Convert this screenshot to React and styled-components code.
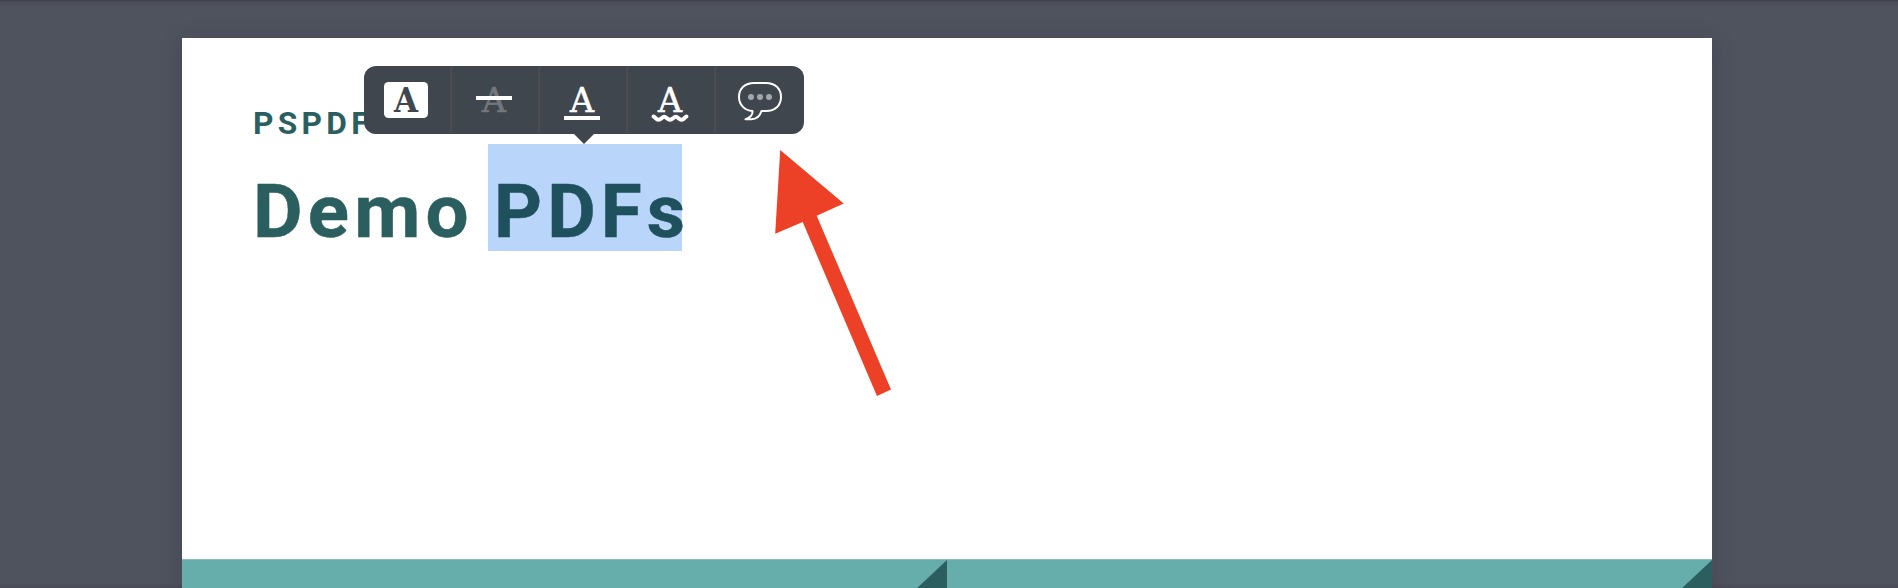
import React from "react";
import styled, { createGlobalStyle } from "styled-components";

const GlobalStyle = createGlobalStyle`
  * { box-sizing: border-box; }
  body { margin: 0; }
`;

const Viewport = styled.main`
  position: relative;
  height: 588px;
  overflow: hidden;
  padding: 38px 186px 0 182px;
  background: linear-gradient(#41444f 0, #41444f 1px, #4a4c58 2px, #4f535e 7px, #4f535e 583px, #494a56 588px);
  font-family: Roboto, "Liberation Sans", sans-serif;
`;

const Page = styled.article`
  display: flex;
  flex-direction: column;
  height: 570px;
  background: #fff;
  box-shadow: 0 4px 18px rgba(60, 52, 72, 0.4);
`;

const Heading = styled.header`
  flex: 0 0 521px;
  padding: 68px 0 0 71px;
  color: #2b5f5f;
`;

const Eyebrow = styled.p`
  margin: 0;
  font-size: 31.7px;
  line-height: 36px;
  font-weight: 700;
  letter-spacing: 4.3px;
  white-space: nowrap;
`;

const Title = styled.h1`
  display: flex;
  height: 107px;
  margin: 2px 0 0;
  font-size: 73.5px;
  line-height: 136px;
  font-weight: 700;
  letter-spacing: 5px;
  white-space: nowrap;
`;

const Word = styled.span`
  width: 235px;
`;

const Selected = styled.span`
  width: 194px;
  padding-left: 6px;
  background: #b9d5fa;
  color: #1f505d;
`;

const Wide = styled.span`
  display: inline-block;
  transform: scaleX(${(p) => p.$stretch});
  transform-origin: 0 50%;
  -webkit-text-stroke: 0.5px currentColor;
`;

const Band = styled.section`
  display: grid;
  grid-template-columns: 765px 765px;
  height: 49px;
`;

const Tile = styled.div`
  display: flex;
  justify-content: flex-end;
  background: #65aeab;
  border-top: 1px solid #8bbfbd;
`;

const Fold = styled.div`
  width: 32px;
  height: 30px;
  background: #2b5f5f;
  clip-path: polygon(100% 0, 100% 100%, 0 100%);
`;

const Toolbar = styled.nav`
  position: absolute;
  left: 364px;
  top: 66px;
  display: flex;
  width: 440px;
  height: 68px;
  border-radius: 12px;
  background: #40464e;

  &::after {
    content: "";
    position: absolute;
    left: 210px;
    top: 68px;
    border: 10px solid transparent;
    border-top-color: #40464e;
    border-bottom: 0;
  }
`;

const Tool = styled.button`
  width: 88px;
  padding: 0;
  border: 0;
  border-right: ${(p) => (p.$last ? "0" : "2px solid #4c4c50")};
  background: none;

  svg { display: block; }
`;

const Letter = styled.text`
  font-family: "DejaVu Serif", serif;
  font-size: 33px;
  font-weight: ${(p) => (p.$bold ? 700 : 400)};
  fill: ${(p) => p.$color || "#fff"};
  stroke: ${(p) => p.$color || "#fff"};
  stroke-width: ${(p) => (p.$bold ? 0 : 0.6)};
`;

const Arrow = styled.svg`
  position: absolute;
  left: 770px;
  top: 140px;
`;

const Glyph = ({ children }) => (
  <svg width="86" height="68" viewBox="0 0 86 68" fill="none" aria-hidden="true">
    {children}
  </svg>
);

export default function App() {
  return (
    <>
      <GlobalStyle />
      <Viewport>
        <Page>
          <Heading>
            <Eyebrow>PSPDFKIT FOR WEB</Eyebrow>
            <Title>
              <Word><Wide $stretch={1.038}>Demo</Wide></Word>
              <Selected><Wide $stretch={1.015}>PDFs</Wide></Selected>
            </Title>
          </Heading>
          <Band>
            <Tile><Fold /></Tile>
            <Tile><Fold /></Tile>
          </Band>
        </Page>
        <Toolbar>
          <Tool aria-label="Highlight">
            <Glyph>
              <rect x="20" y="16" width="44" height="36" rx="4.5" fill="#fff" />
              <Letter $bold $color="#40464e" x="30" y="46" textLength="24" lengthAdjust="spacingAndGlyphs">A</Letter>
            </Glyph>
          </Tool>
          <Tool aria-label="Strikeout">
            <Glyph>
              <Letter $color="#73777e" x="30" y="46" textLength="24" lengthAdjust="spacingAndGlyphs">A</Letter>
              <path d="M24 32H60" stroke="#fff" strokeWidth="4" />
            </Glyph>
          </Tool>
          <Tool aria-label="Underline">
            <Glyph>
              <Letter x="30" y="46" textLength="24" lengthAdjust="spacingAndGlyphs">A</Letter>
              <path d="M24 52H60" stroke="#fff" strokeWidth="4" />
            </Glyph>
          </Tool>
          <Tool aria-label="Squiggle">
            <Glyph>
              <Letter x="30" y="46" textLength="24" lengthAdjust="spacingAndGlyphs">A</Letter>
              <path d="M25.5 50.5C27.5 51 28 53.8 30.5 53.8S34 50.8 36.2 50.8S39.5 53.8 42 53.8S45.6 50.8 47.8 50.8S51 53.8 53.5 53.8S56.5 51 58.5 50.5" stroke="#fff" strokeWidth="4" strokeLinecap="round" />
            </Glyph>
          </Tool>
          <Tool aria-label="Comment" $last>
            <Glyph>
              <path d="M36.5 45C28.5 44.5 23 38.5 23 31C23 22.5 29 17 38 17H50C59 17 65 22.5 65 31C65 39.5 59 45 50 45H45.5C44 50 41 53.2 35.5 53.2H29.5C34.5 51.5 37 49.5 36.5 45Z" stroke="#fff" strokeWidth="2" strokeLinejoin="round" />
              <circle cx="35" cy="31" r="3" fill="#a3a6aa" />
              <circle cx="44" cy="31" r="3" fill="#a3a6aa" />
              <circle cx="53" cy="31" r="3" fill="#a3a6aa" />
            </Glyph>
          </Tool>
        </Toolbar>
        <Arrow width="130" height="264" viewBox="0 0 130 264" aria-hidden="true">
          <path d="M10.2 10L73.7 63.5L46.7 75.8L121 249.5L107 256L32.7 82L5.2 93.8Z" fill="#ec4126" />
        </Arrow>
      </Viewport>
    </>
  );
}
